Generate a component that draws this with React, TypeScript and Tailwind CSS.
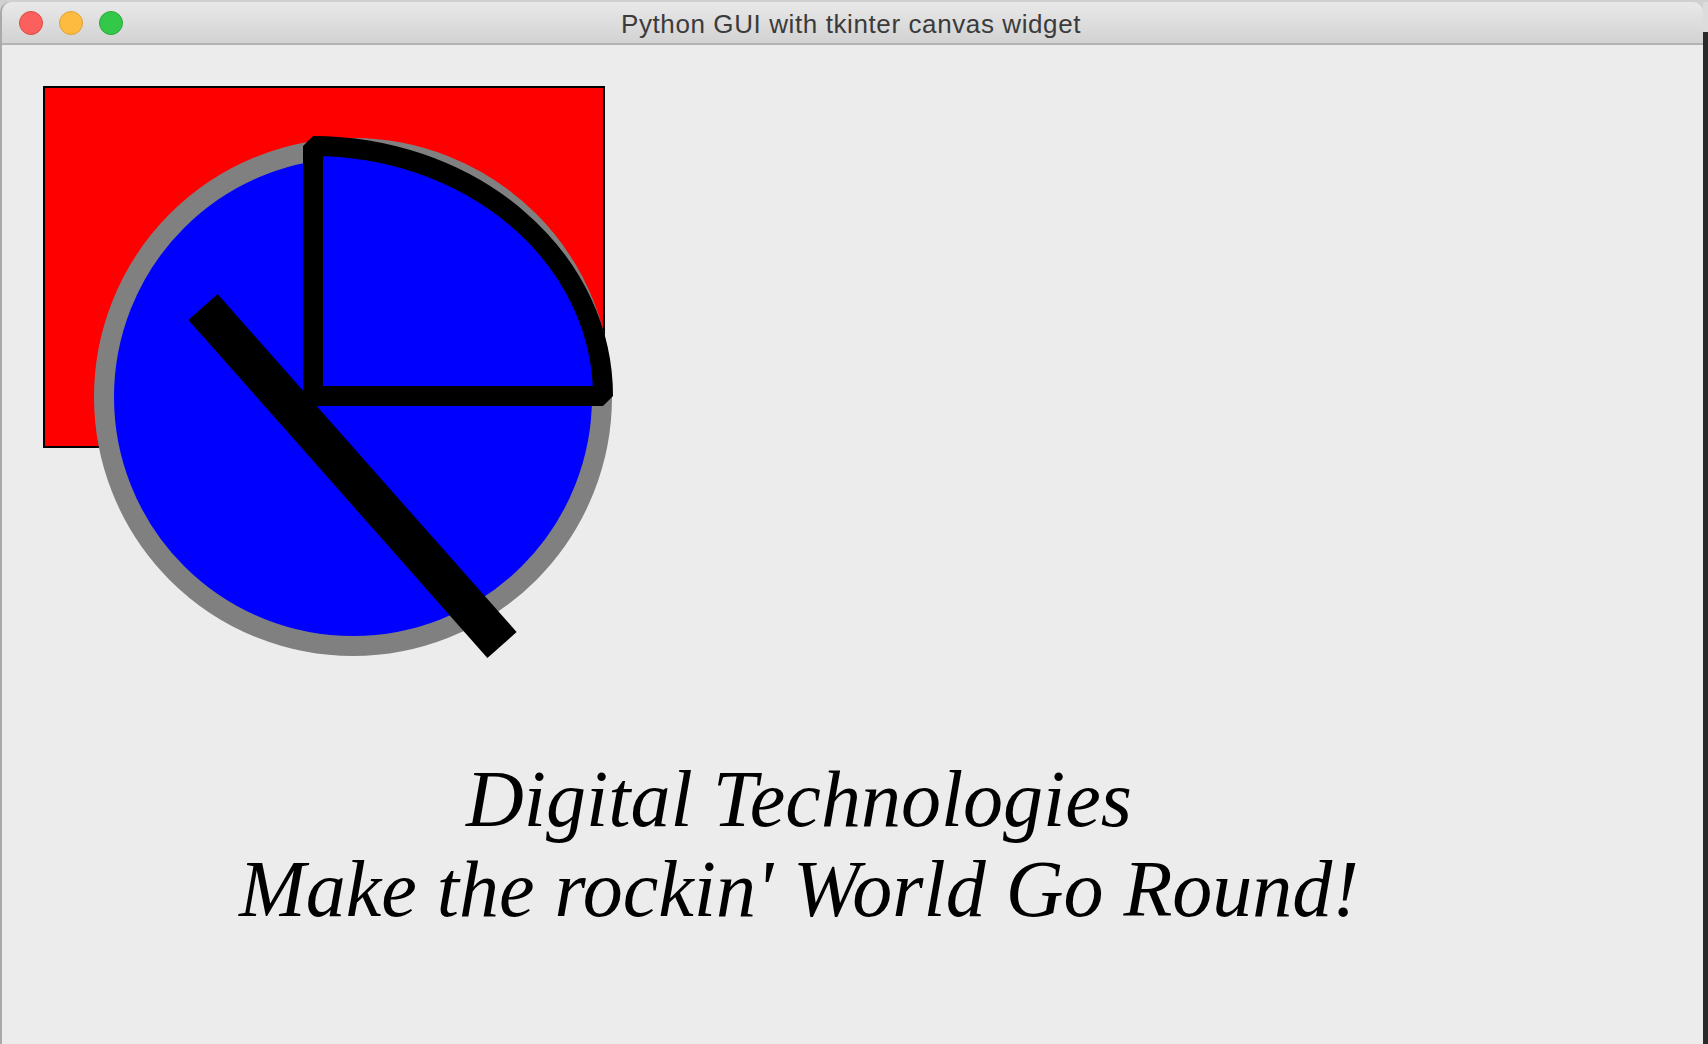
const lights = [
  { fill: "bg-[#fc605c]", ring: "border-[#de4a43]" },
  { fill: "bg-[#fdbc40]", ring: "border-[#dea236]" },
  { fill: "bg-[#34c84a]", ring: "border-[#27aa35]" },
];

function TitleBar() {
  return (
    <div className="h-[43px] flex items-center bg-gradient-to-b from-[#e9e9e9] to-[#d2d2d2] border-b-2 border-[#b3b3b3] rounded-tl-[10px] rounded-tr-[10px] shrink-0">
      <div className="flex items-center gap-[16px] pl-[17px] pt-[1px]">
        {lights.map((l, i) => (
          <div
            key={i}
            className={`w-[24px] h-[24px] rounded-full border ${l.fill} ${l.ring}`}
          />
        ))}
      </div>
      <div
        className="ml-[498px] text-[26px] tracking-[0.6px] text-[#3b3b3b] leading-none pt-[3px]"
        style={{ fontFamily: '"Liberation Sans", Arial, sans-serif' }}
      >
        Python GUI with tkinter canvas widget
      </div>
    </div>
  );
}

// tkinter canvas drawing, coordinates are page pixels (viewBox offset = content origin)
function CanvasDrawing() {
  return (
    <svg width="640" height="620" viewBox="2 45 640 620" className="block shrink-0">
      <rect x="44" y="87" width="560" height="360" fill="#ff0000" stroke="#000" strokeWidth="2" />
      <circle cx="353" cy="397" r="249" fill="#0000ff" stroke="#808080" strokeWidth="20" />
      <path
        d="M 313 396 L 313 146 A 290 250 0 0 1 603 396 Z"
        fill="#0000ff"
        stroke="#000"
        strokeWidth="20"
        strokeLinejoin="bevel"
      />
      <line x1="203" y1="307" x2="502" y2="645" stroke="#000" strokeWidth="39" strokeLinecap="butt" />
    </svg>
  );
}

export default function App() {
  return (
    <div className="w-[1708px] h-[1044px] flex bg-[#d0d0d0] pt-[2px] overflow-hidden">
      <div className="w-[1703px] flex flex-col border-l-2 border-[#a9a9a9] rounded-tl-[10px]">
        <TitleBar />
        <div className="flex-1 bg-[#ececec] flex flex-col">
          <CanvasDrawing />
          <div
            className="w-[1594px] mt-[89px] text-center italic text-black text-[80px] leading-[90px]"
            style={{ fontFamily: '"Liberation Serif", "Times New Roman", serif' }}
          >
            <div>Digital Technologies</div>
            <div>Make the rockin' World Go Round!</div>
          </div>
        </div>
      </div>
      <div className="flex-1 flex flex-col">
        <div className="h-[30px] bg-[#dcdcdc]" />
        <div className="flex-1 bg-[#2a2a2a]" />
      </div>
    </div>
  );
}
